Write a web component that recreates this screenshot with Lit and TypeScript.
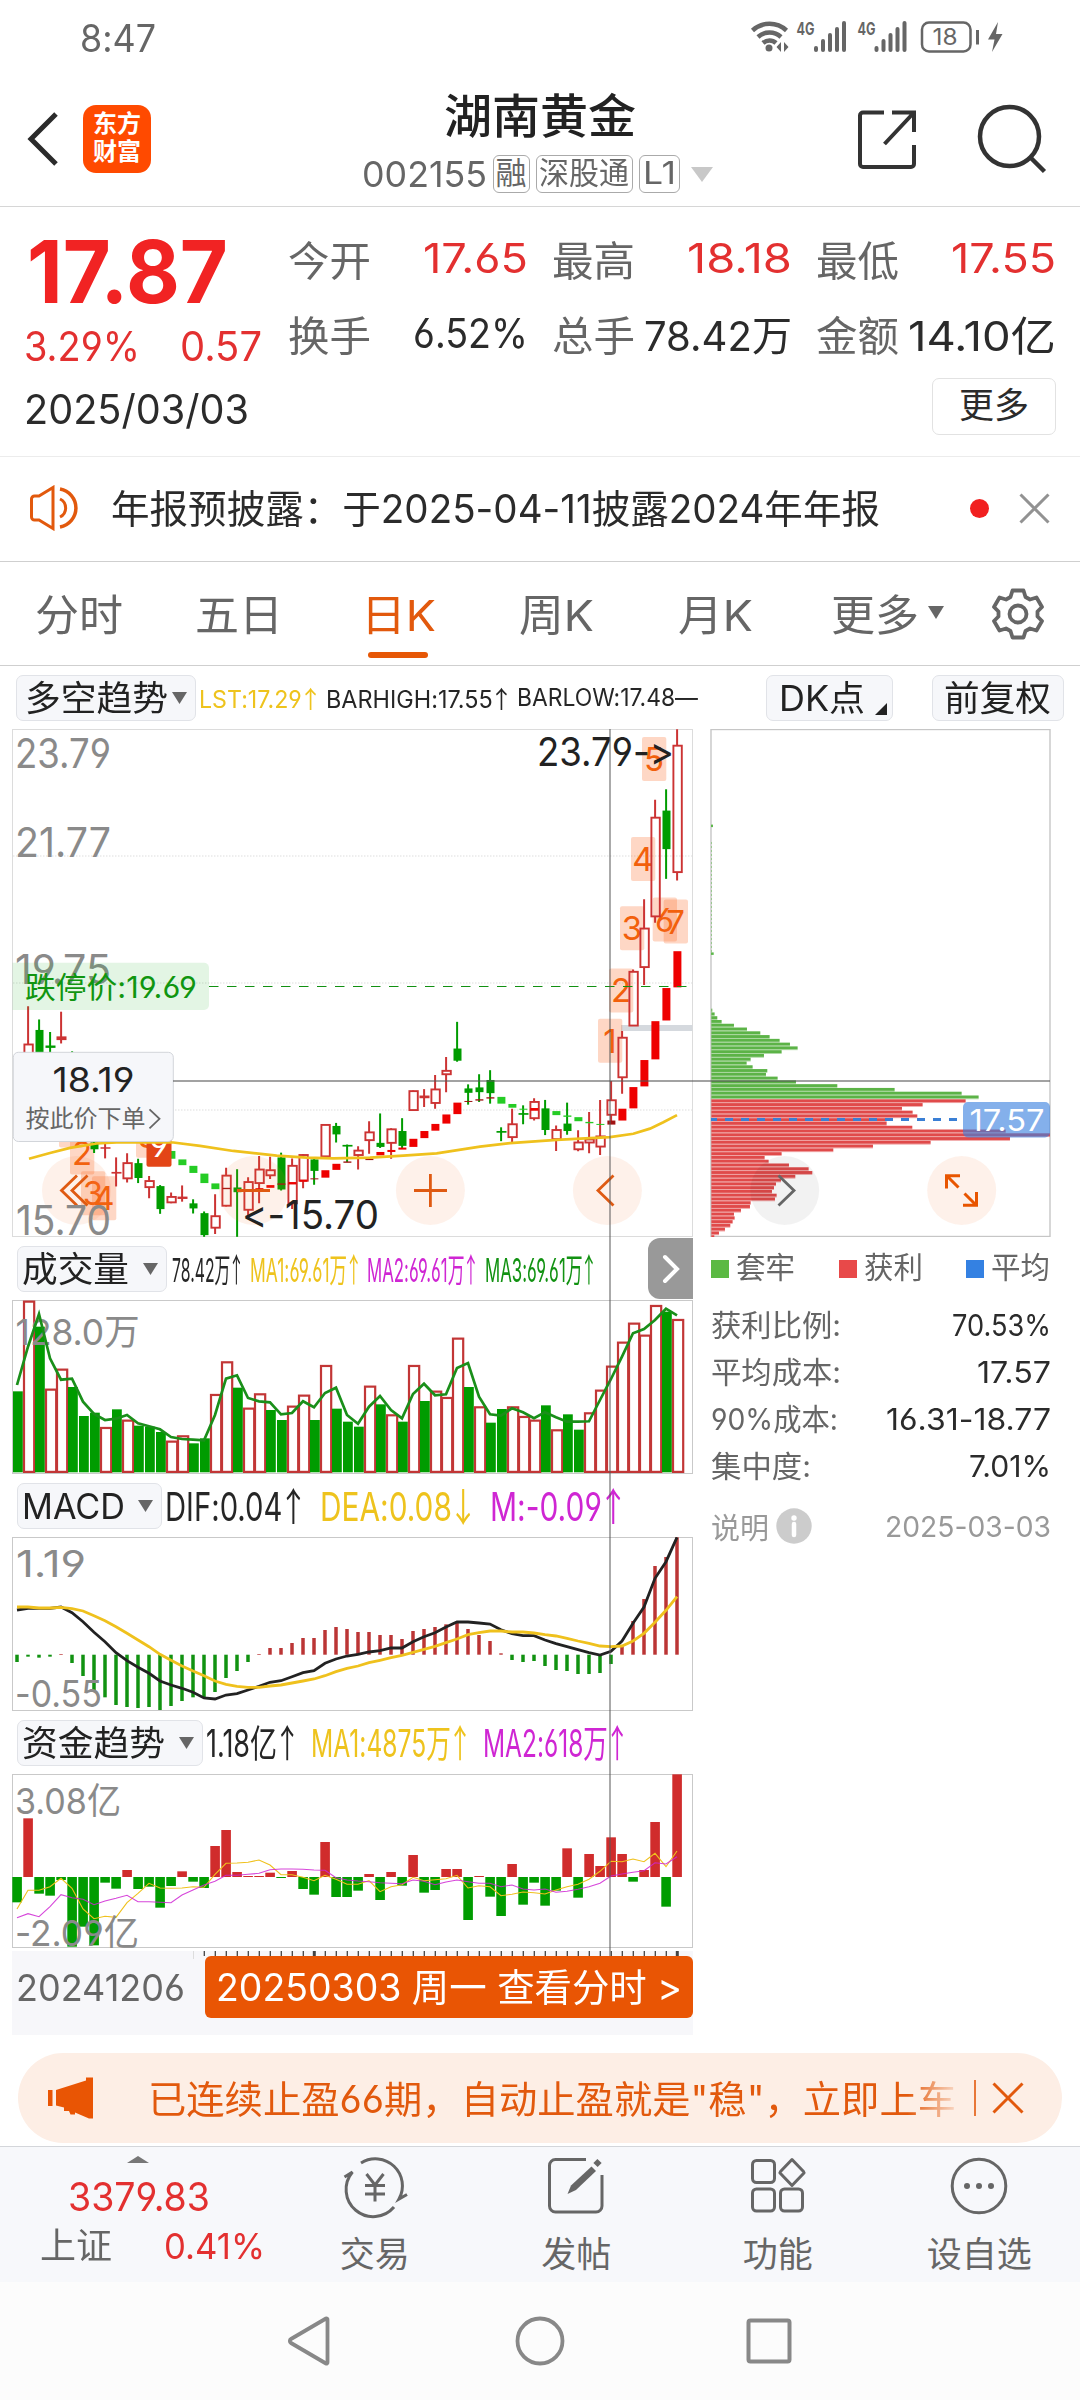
import { LitElement, html, svg, css, nothing } from "lit";
import { customElement, property } from "lit/decorators.js";
import { classMap } from "lit/directives/class-map.js";

const RED = "#cc3333";
const GREEN = "#009c00";
const YELLOW = "#efc11d";
const PURPLE = "#cf26d3";
const ORANGE = "#e85500";

/* One trading day every 11px; indicator values are in thirds of a pixel. */
const cx = (i: number) => 17 + 11 * i;
const t = (v: number) => v / 3;
/* Price units to pixels. */
const p = (v: number) => v / 2.9585;

/* index, wick top, body top, body bottom, wick bottom, kind (h hollow red, r solid red, g green) */
type Candle = [number, number, number, number, number, string];
const CANDLES: Candle[] = [
  [1, 847, 960, 1010, 1040, "h"], [2, 886, 917, 985, 1000, "g"], [3, 923, 963, 970, 985, "g"],
  [4, 863, 936, 947, 957, "r"], [5, 980, 990, 1040, 1050, "g"], [7, 1240, 1250, 1270, 1281, "g"],
  [8, 1250, 1264, 1268, 1297, "r"], [9, 1294, 1337, 1342, 1380, "r"], [10, 1282, 1311, 1356, 1368, "h"],
  [11, 1298, 1311, 1355, 1370, "g"], [12, 1349, 1364, 1382, 1415, "h"], [13, 1376, 1379, 1447, 1461, "g"],
  [14, 1398, 1411, 1427, 1430, "h"], [15, 1377, 1410, 1417, 1425, "r"], [16, 1418, 1430, 1445, 1460, "g"],
  [17, 1454, 1459, 1524, 1529, "g"], [18, 1403, 1468, 1502, 1521, "h"], [19, 1325, 1348, 1437, 1439, "h"],
  [20, 1329, 1383, 1397, 1529, "g"], [21, 1353, 1367, 1449, 1475, "h"], [22, 1290, 1330, 1370, 1430, "h"],
  [23, 1292, 1332, 1347, 1358, "h"], [24, 1280, 1294, 1389, 1392, "g"], [25, 1297, 1319, 1430, 1447, "h"],
  [26, 1285, 1287, 1363, 1385, "h"], [27, 1297, 1300, 1334, 1375, "g"], [28, 1196, 1198, 1291, 1293, "h"],
  [29, 1192, 1201, 1226, 1250, "g"], [30, 1256, 1257, 1262, 1308, "g"], [31, 1261, 1274, 1287, 1330, "h"],
  [32, 1187, 1220, 1243, 1283, "h"], [33, 1164, 1251, 1263, 1266, "g"], [34, 1208, 1211, 1251, 1298, "h"],
  [35, 1178, 1216, 1260, 1268, "g"], [36, 1096, 1098, 1154, 1156, "h"], [37, 1092, 1111, 1119, 1145, "r"],
  [38, 1050, 1093, 1133, 1150, "h"], [39, 997, 1038, 1048, 1101, "h"], [40, 893, 972, 1008, 1011, "g"],
  [41, 1078, 1090, 1103, 1138, "g"], [42, 1048, 1087, 1101, 1130, "g"], [43, 1036, 1065, 1104, 1135, "g"],
  [44, 1205, 1216, 1221, 1246, "g"], [45, 1150, 1196, 1234, 1254, "h"], [46, 1140, 1163, 1168, 1196, "g"],
  [47, 1119, 1130, 1178, 1185, "h"], [48, 1124, 1149, 1213, 1228, "g"], [49, 1200, 1213, 1240, 1275, "h"],
  [50, 1132, 1194, 1216, 1227, "g"], [51, 1214, 1250, 1270, 1276, "h"], [52, 1160, 1241, 1250, 1282, "h"],
  [53, 1124, 1232, 1262, 1287, "h"], [54, 1068, 1125, 1168, 1190, "h"], [55, 920, 940, 1057, 1106, "h"],
  [56, 738, 745, 904, 905, "h"], [57, 530, 617, 731, 784, "h"], [58, 236, 289, 581, 600, "h"],
  [59, 205, 268, 382, 470, "g"], [60, 27, 76, 450, 475, "h"],
];

/* index, top, bottom, kind (g green, r red, d dark red) */
const BANDS: [number, number, number, string][] = [
  [14, 1275, 1298, "g"], [15, 1300, 1317, "g"], [16, 1319, 1340, "g"], [17, 1342, 1370, "g"], [18, 1371, 1388, "g"],
  [19, 1384, 1388, "d"], [22, 1385, 1389, "r"], [23, 1376, 1384, "r"], [24, 1371, 1375, "d"], [25, 1367, 1374, "r"],
  [26, 1360, 1366, "r"], [27, 1356, 1359, "d"], [28, 1332, 1354, "r"], [29, 1313, 1331, "r"], [30, 1306, 1310, "d"],
  [32, 1298, 1302, "d"], [33, 1278, 1288, "r"], [34, 1272, 1278, "r"], [35, 1265, 1271, "r"], [36, 1239, 1263, "r"],
  [37, 1216, 1237, "r"], [38, 1195, 1215, "r"], [39, 1167, 1194, "r"], [40, 1132, 1166, "r"], [41, 1127, 1130, "d"],
  [42, 1122, 1126, "d"], [43, 1116, 1120, "d"], [44, 1115, 1135, "g"], [45, 1136, 1147, "g"], [46, 1150, 1153, "g"],
  [47, 1148, 1156, "r"], [49, 1157, 1169, "g"], [50, 1170, 1174, "g"], [51, 1175, 1187, "g"], [52, 1189, 1193, "g"],
  [53, 1195, 1198, "g"], [54, 1185, 1197, "d"], [55, 1150, 1185, "r"], [56, 1086, 1149, "r"], [57, 1006, 1084, "r"],
  [58, 891, 1004, "r"], [59, 793, 889, "r"], [60, 684, 791, "r"],
];
const BAND_FILL: Record<string, string> = { g: "#25cc25", r: "#ee0000", d: "#a01212" };

const TREND = [
  [87, 1298], [150, 1281], [210, 1266], [290, 1253], [350, 1250], [420, 1249], [520, 1250], [600, 1260], [700, 1275],
  [830, 1289], [920, 1295], [1000, 1297], [1110, 1295], [1210, 1289], [1310, 1282], [1440, 1262], [1530, 1252],
  [1670, 1242], [1770, 1237], [1830, 1234], [1900, 1224], [1950, 1209], [1990, 1190], [2031, 1169],
];

const VOLUME =
  "g484 r214 g290 r478 r418 g471 g558 g548 r593 g538 r571 g587 g590 g606 r634 r618 g640 g625 r494 r396 g473 r535 r492 g540 g570 r529 r496 g570 r407 g536 g575 g590 r469 g523 r555 g575 r407 g513 r484 r503 r325 g471 r531 g578 g537 r531 r560 r571 g526 r600 g553 g599 r549 r481 r409 r337 r280 r316 r227 g245 r269".split(" ");
const VOLUME_MA = [
  465, 350, 252, 385, 449, 446, 515, 552, 570, 566, 555, 580, 589, 598, 621, 627, 629, 631, 555, 446, 436, 504, 514,
  517, 553, 549, 514, 532, 489, 473, 555, 581, 530, 498, 540, 565, 492, 461, 496, 493, 414, 399, 500, 553, 557, 535,
  547, 565, 547, 562, 575, 575, 574, 510, 447, 380, 310, 297, 270, 236, 256,
];

const MACD = [
  576, 560, 563, 560, 552, 579, 618, 660, 682, 705, 711, 714, 711, 720, 708, 693, 682, 682, 666, 624, 603, 576, 552,
  534, 534, 519, 504, 504, 480, 471, 477, 486, 486, 495, 495, 507, 483, 477, 471, 463, 456, 477, 495, 513, 550, 570,
  576, 573, 588, 600, 603, 612, 612, 609, 582, 528, 453, 387, 288, 261, 202,
];
const DIF = [
  420, 415, 415, 415, 411, 428, 455, 487, 515, 548, 572, 592, 610, 633, 645, 655, 667, 684, 687, 675, 671, 660, 649,
  637, 632, 620, 608, 602, 580, 567, 558, 553, 546, 542, 534, 534, 515, 500, 488, 471, 456, 456, 459, 462, 479, 491,
  497, 497, 510, 521, 530, 539, 548, 555, 544, 513, 460, 411, 325, 275, 202,
];
const DEA = [
  411, 411, 414, 414, 412, 416, 423, 437, 452, 470, 490, 510, 530, 553, 571, 588, 603, 617, 633, 643, 649, 652, 652,
  648, 645, 639, 633, 627, 617, 605, 595, 588, 578, 571, 563, 556, 547, 538, 529, 518, 507, 494, 488, 483, 483, 486,
  486, 489, 494, 498, 505, 513, 520, 528, 530, 528, 513, 490, 457, 421, 380,
];

const FUND = [
  577, 325, 551, 557, 510, 710, 650, 706, 518, 536, 480, 537, 530, 593, 528, 484, 515, 534, 408, 360, 486, 498, 498,
  488, 504, 483, 537, 554, 396, 561, 561, 542, 492, 570, 486, 527, 435, 548, 540, 477, 477, 630, 498, 560, 618, 462,
  584, 518, 587, 542, 415, 563, 432, 468, 382, 432, 515, 480, 336, 590, 193,
];
const FUND_MA1 = [
  597, 541, 541, 530, 505, 535, 597, 626, 619, 622, 578, 550, 520, 534, 535, 534, 530, 532, 493, 460, 459, 457, 450,
  465, 494, 494, 502, 512, 496, 508, 523, 523, 512, 545, 530, 524, 502, 512, 509, 506, 496, 534, 527, 530, 557, 553,
  546, 548, 552, 540, 530, 523, 508, 484, 454, 455, 447, 455, 430, 470, 423,
];
const FUND_MA2 = [
  623, 611, 620, 590, 554, 563, 568, 584, 573, 565, 556, 575, 575, 577, 578, 555, 540, 525, 514, 496, 496, 493, 490,
  479, 477, 477, 478, 480, 481, 503, 510, 513, 515, 518, 520, 521, 510, 514, 524, 516, 510, 515, 520, 520, 530, 525,
  537, 540, 537, 547, 544, 538, 530, 520, 498, 492, 487, 482, 458, 462, 440,
];

const CHIPS_LOSS = [
  34, 37, 44, 52, 65, 102, 141, 181, 209, 239, 270, 293, 245, 192, 152, 140, 158, 202, 198, 233, 288, 412, 584, 785, 836,
];
const CHIPS_GAIN = [
  797, 668, 606, 638, 652, 560, 560, 637, 917, 1050, 930, 692, 519, 400, 245, 194, 206, 267, 326, 337, 286, 243, 228,
  222, 216, 230, 225, 152, 150, 123, 102, 104, 98, 91, 75, 57, 43,
];

const line = (values: number[]) => values.map((v, i) => `${cx(i)},${t(v).toFixed(1)}`).join(" ");

/* Text laid out at a given width: glyphs are condensed or widened to fill it. */
@customElement("fit-text")
class FitText extends LitElement {
  @property({ type: Number }) w = 0;
  @property() text = "";
  static styles = css`
    :host { display: inline-block; white-space: pre; flex: none; }
    .inner { display: inline-block; transform-origin: 0 50%; }
    .arrow { font-family: "Noto Sans CJK SC", sans-serif; margin-left: -0.12em; margin-right: -0.14em; }
  `;
  updated() {
    const inner = this.renderRoot.querySelector(".inner") as HTMLElement;
    inner.style.transform = "none";
    const natural = inner.getBoundingClientRect().width;
    this.style.width = `${this.w}px`;
    if (natural) inner.style.transform = `scaleX(${this.w / natural})`;
  }
  render() {
    const last = this.text.slice(-1);
    const arrow = last === "↑" || last === "↓";
    return html`<span class="inner">${arrow ? this.text.slice(0, -1) : this.text}${arrow ? html`<span class="arrow">${last}</span>` : nothing}</span>`;
  }
}

const fit = (text: string, w: number, cls = "") => html`<fit-text class=${cls} .text=${text} .w=${w}></fit-text>`;

const stext = (x: number, y: number, w: number, size: number, fill: string, text: string) =>
  svg`<text x=${x} y=${y} font-size=${size} fill=${fill} textLength=${w} lengthAdjust="spacingAndGlyphs">${text}</text>`;

const badge = (x: number, y: number, label: string) => svg`
  <rect x=${x} y=${y} width="24.3" height="44" rx="2" fill="#fa6a28" fill-opacity=".27" />
  <text x=${x + 12} y=${y + 34} font-size="33" text-anchor="middle" fill="#f2600c">${label}</text>`;

@customElement("price-chart")
class PriceChart extends LitElement {
  static styles = css`
    :host { display: block; height: 508px; }
    svg { display: block; font-family: Inter, "Noto Sans CJK SC", sans-serif; font-feature-settings: "cv03", "cv04", "calt" 0; }
  `;
  private candle([i, wt, bt, bb, wb, kind]: Candle) {
    const x = cx(i);
    const color = kind === "g" ? GREEN : RED;
    if (kind === "h") {
      return svg`<path d="M${x + 0.1} ${p(wt)}V${p(bt)}M${x + 0.1} ${p(bb)}V${p(wb)}" stroke=${color} stroke-width="2" />
        <rect x=${x - 3.6} y=${p(bt)} width="8.4" height=${p(bb - bt)} fill="none" stroke=${color} stroke-width="1.9" />`;
    }
    const w = bb - bt < 12 ? 10 : 8;
    return svg`<path d="M${x + 0.1} ${p(wt)}V${p(wb)}" stroke=${color} stroke-width="2" />
      <rect x=${x + 0.5 - w / 2} y=${p(bt)} width=${w} height=${Math.max(1.5, p(bb - bt))} fill=${color} />`;
  }
  render() {
    return html`<svg width="681" height="508" viewBox="12 9 681 508">
      <rect x="12.5" y="9.5" width="680" height="507" fill="none" stroke="#dcdcdc" />
      ${[136, 263, 390].map((y) => svg`<path d="M13 ${y}H692" stroke="#dddddd" stroke-dasharray="1.5 1.5" />`)}
      ${stext(15, 48.3, 96, 41, "#8a8a8a", "23.79")} ${stext(15, 137, 96, 41, "#8a8a8a", "21.77")}
      ${stext(15, 264, 96, 41, "#8a8a8a", "19.75")}
      <rect x="621" y="305" width="71.5" height="6" fill="#d5d9de" />
      ${badge(598, 298.8, "1")} ${badge(609, 248.4, "2")} ${badge(620, 186.2, "3")} ${badge(631, 117, "4")}
      ${badge(642, 17, "5")} ${badge(652.7, 177.5, "6")} ${badge(663.7, 179.5, "7")}
      ${badge(59, 383.6, "")} ${badge(70, 410.6, "2")} ${badge(81, 451.2, "3")} ${badge(92, 456.3, "4")}
      ${badge(136, 393.7, "8")}
      ${CANDLES.map((c) => this.candle(c))}
      ${BANDS.map(([i, a, b, k]) => svg`<rect x=${cx(i) - 3.6} y=${p(a)} width="8" height=${Math.max(1, p(b - a))} fill=${BAND_FILL[k]} />`)}
      <rect x="146.5" y="394" width="25" height="52.8" rx="2" fill="#e34517" />
      <text x="159" y="436.7" font-size="33" text-anchor="middle" fill="#fff">9</text>
      <polyline points=${TREND.map(([x, y]) => `${t(x)},${p(y)}`).join(" ")} fill="none" stroke=${YELLOW} stroke-width="2.7" />
      <g fill="#fa7332" fill-opacity=".1">
        <circle cx="76.5" cy="470.5" r="34.5" /><circle cx="253.5" cy="470.5" r="34.5" />
        <circle cx="430.4" cy="470.5" r="34.5" /><circle cx="607.4" cy="470.5" r="34.5" />
      </g>
      <g fill="none" stroke="#df5a12" stroke-width="2.8">
        <path d="M77 455.5L61.5 470.5L77 485.5M87.5 455.5L72 470.5L87.5 485.5" />
        <path d="M237 470.5H270M414 470.5H447M430.4 454V487" />
        <path d="M613.5 455.5L598 470.5L613.5 485.5" />
      </g>
      ${stext(16, 514.5, 95, 41, "#8a8a8a", "15.70")}
      ${stext(242, 508.7, 137, 39, "#222", "<-15.70")}
      ${stext(537, 45.6, 137, 39, "#222", "23.79->")}
      <path d="M209 266.5H687" stroke="#129012" stroke-dasharray="9.5 8.5" />
      <path d="M12.5 242.7H204a5 5 0 0 1 5 5V285a5 5 0 0 1 -5 5H12.5Z" fill="#27b02f" fill-opacity=".13" />
      ${stext(25, 278, 172, 30, "#109510", "跌停价:19.69")}
      <rect x="13.3" y="332.3" width="160" height="89.2" rx="5" fill="#f6f7fa" stroke="#d2d5da" />
      ${stext(52.5, 372.2, 82, 33.5, "#222", "18.19")}
      ${stext(25.5, 407.3, 120, 24, "#666", "按此价下单")}
      <path d="M149.5 389.4L159.5 398.8L149.5 408.3" fill="none" stroke="#666" stroke-width="1.8" />
    </svg>`;
  }
}

@customElement("indicator-chart")
class IndicatorChart extends LitElement {
  @property() kind = "volume";
  static styles = css`
    :host { display: block; height: 174px; }
    svg { display: block; font-family: Inter, "Noto Sans CJK SC", sans-serif; font-feature-settings: "cv03", "cv04", "calt" 0; }
  `;
  private volume() {
    return svg`
      ${VOLUME.map((d, i) => {
        const top = t(Number(d.slice(1)));
        return d[0] === "g"
          ? svg`<rect x=${cx(i) - 4} y=${top} width="9.8" height=${242.3 - top} fill=${GREEN} />`
          : svg`<rect x=${cx(i) - 4} y=${top + 0.3} width="10.2" height=${241.6 - top} fill="#fff" stroke="#c23636" stroke-width="2.2" />`;
      })}
      ${stext(15.5, 114.7, 124, 36, "#8a8a8a", "128.0万")}
      <polyline points=${line(VOLUME_MA)} fill="none" stroke="#1a8f1a" stroke-width="2.7" />`;
  }
  private macd() {
    return svg`
      ${stext(16, 107, 70, 37, "#8a8a8a", "1.19")}
      ${MACD.map((v, i) => svg`<path d="M${cx(i)} 184.7V${t(v)}" stroke=${v > 554 ? "#119211" : "#bb3535"} stroke-width="3.5" />`)}
      <polyline points=${line(DIF)} fill="none" stroke="#222" stroke-width="2.8" />
      <polyline points=${line(DEA)} fill="none" stroke=${YELLOW} stroke-width="2.8" />
      ${stext(15, 237, 87, 37, "#8a8a8a", "-0.55")}`;
  }
  private fund() {
    return svg`
      ${stext(15, 104.3, 106, 36, "#8a8a8a", "3.08亿")}
      ${FUND.map((v, i) => svg`<rect x=${cx(i) - 4.7} y=${t(Math.min(v, 501))} width="9.6" height=${t(Math.abs(v - 501))} fill=${v > 501 ? GREEN : "#d02c2c"} />`)}
      <polyline points=${line(FUND_MA1)} fill="none" stroke=${YELLOW} stroke-width="1.1" />
      <polyline points=${line(FUND_MA2)} fill="none" stroke=${PURPLE} stroke-width="1.1" stroke-opacity=".85" />
      ${stext(15, 236, 124, 36, "#8a8a8a", "-2.09亿")}`;
  }
  render() {
    const top = this.kind === "volume" ? 70 : this.kind === "macd" ? 67 : 64;
    return html`<svg width="681" height="174" viewBox="12 ${top} 681 174">
      <rect x="12.5" y=${top + 0.5} width="680" height="173" fill="none" stroke="#c9c9c9" />
      ${this.kind === "volume" ? this.volume() : this.kind === "macd" ? this.macd() : this.fund()}
    </svg>`;
  }
}

@customElement("chip-chart")
class ChipChart extends LitElement {
  static styles = css`
    :host { display: block; height: 508px; }
    svg { display: block; font-family: Inter, sans-serif; font-feature-settings: "cv03", "cv04"; }
  `;
  render() {
    const bar = (end: number, i: number, fill: string, base: number) =>
      svg`<rect x="11.3" y=${p(base + i * 11.17 - 4.2)} width=${t(end - 34)} height="2.9" fill=${fill} />
        <rect x="11.3" y=${p(base + i * 11.17 + 4.5)} width=${t(end - 34)} height=".8" fill=${fill} fill-opacity=".55" />`;
    return html`<svg width="342" height="508" viewBox="10 9 342 508">
      <rect x="11" y="9.5" width="339" height="507" fill="none" stroke="#c6c6c6" stroke-width="1.4" />
      <path d="M11.5 122V233" stroke="#5db84a" stroke-dasharray="2 2" stroke-opacity=".5" />
      <rect x="11" y="104.6" width="2" height="2.5" fill="#5db84a" /><rect x="11" y="232.4" width="2.7" height="2.5" fill="#5db84a" />
      ${CHIPS_LOSS.map((v, i) => bar(v, i, "#5cb347", 847))}
      ${CHIPS_GAIN.map((v, i) => bar(v, i, "#e04a4a", 1126.4))}
      <path d="M11 399.5H262" stroke="#3a7fd5" stroke-width="2.8" stroke-dasharray="8 8" stroke-dashoffset="2" />
      <rect x="263" y="382" width="87" height="35.5" rx="5" fill="#3880df" fill-opacity=".62" />
      ${stext(269.5, 410.7, 75, 30, "#fff", "17.57")}
      <circle cx="84.7" cy="470.5" r="34.5" fill="#000" fill-opacity=".05" />
      <path d="M78.5 455.5L94 470.5L78.5 485.5" fill="none" stroke="#666" stroke-width="2.8" />
      <circle cx="261.7" cy="470.5" r="34.5" fill="#fa7332" fill-opacity=".1" />
      <path d="M246.5 468.5V455.8H260M247 456L258.5 467.5M264.5 473.5L276 485M276.5 472V485.2H263" fill="none" stroke=${ORANGE} stroke-width="3" />
    </svg>`;
  }
}

@customElement("app-root")
class AppRoot extends LitElement {
  static styles = css`
    :host {
      display: block; width: 1080px; height: 2400px; overflow: hidden; background: #fff; color: #2b2b2b;
      font-family: Inter, "Noto Sans CJK SC", sans-serif; font-feature-settings: "cv03", "cv04", "calt" 0;
    }
    * { box-sizing: border-box; }
    svg { display: block; flex: none; }
    .status { height: 72px; padding: 0 76px 0 80px; display: flex; justify-content: space-between; color: #666; font-size: 38px; line-height: 76px; }
    .status svg { margin-top: 16px; }
    .header { height: 135px; display: grid; grid-template-columns: 360px 360px 360px; border-bottom: 1px solid #d6d6d6; }
    .brand { display: flex; align-items: center; padding-left: 26px; gap: 23px; }
    .logo { width: 68px; height: 68px; border-radius: 13px; background: #ff4a00; color: #fff; font-size: 24px; font-weight: 700; line-height: 28px; padding: 5px 0 0 10px; }
    .title { display: flex; flex-direction: column; align-items: center; padding-top: 15px; }
    .name { font-size: 47px; line-height: 57px; height: 57px; font-weight: 500; color: #222; }
    .code { display: flex; align-items: center; height: 60px; font-size: 36px; color: #666; margin-left: -6px; }
    .tag { height: 38px; border: 1.5px solid #aaa; border-radius: 6px; font-size: 31px; line-height: 34px; display: flex; justify-content: center; margin-left: 6px; }
    .code .tri { margin-left: 11px; }
    .actions { display: flex; align-items: center; justify-content: flex-end; padding-right: 33px; gap: 56px; }

    .quote { height: 250px; border-bottom: 1px solid #ececec; padding: 10px 24px 0 24px; }
    .figures { display: flex; height: 161px; }
    .latest { width: 264px; color: #e33030; }
    .price { font-size: 87px; font-weight: 650; line-height: 110px; height: 108px; padding-left: 3px; color: #f12323; }
    .change { display: flex; font-size: 41px; line-height: 42px; width: 238px; justify-content: space-between; }
    .stats { flex: 1; display: grid; grid-template-columns: repeat(3, 240px); column-gap: 24px; grid-template-rows: 75px 75px; padding-top: 3px; }
    .stat { display: flex; justify-content: space-between; align-items: center; font-size: 41px; }
    .stat .label { color: #666; }
    .up { color: #e33030; }
    .dateline { display: flex; justify-content: space-between; align-items: center; }
    .date { font-size: 41px; padding-top: 5px; }
    .more { width: 124px; height: 57px; border: 1.5px solid #e2e2e2; border-radius: 7px; font-size: 35px; line-height: 53px; text-align: center; }

    .notice { height: 105px; border-bottom: 1px solid #cfcfcf; display: flex; align-items: center; padding: 0 29px 2px 29px; font-size: 39px; }
    .notice .msg { margin-left: 30px; flex: 1; padding-bottom: 4px; }
    .dot { width: 19px; height: 19px; border-radius: 50%; background: #f12020; margin-right: 29px; }

    .tabs { height: 104px; border-bottom: 1px solid #cfcfcf; display: grid; grid-template-columns: repeat(6, 159px) 126px; color: #666; font-size: 43px; }
    .tab { position: relative; display: flex; align-items: center; justify-content: center; padding-bottom: 4px; }
    .tab:first-child { padding-right: 2px; }
    .tab.gear { padding: 0 0 0 2px; }
    .tab.active { color: #e2590d; padding-left: 1px; }
    .tab.active::after { content: ""; position: absolute; left: 50px; bottom: 7px; width: 60px; height: 6px; border-radius: 3px; background: #e65706; }
    .tab .tri { margin: 2px -25px 0 9px; }

    .tools { height: 63px; display: flex; align-items: center; padding: 0 16px; }
    .chip { height: 46px; border: 1.5px solid #e1e3e8; border-radius: 7px; background: #f6f7fa; color: #222; font-size: 35px; display: flex; align-items: center; flex: none; position: relative; line-height: 44px; }
    .readout { display: flex; align-items: center; white-space: pre; }
    .tools .readout { font-size: 24px; margin-left: 3px; gap: 7px; flex: 1; }
    .corner { position: absolute; right: 5px; bottom: 5px; }
    .c-y { color: #eec31d; } .c-k { color: #262626; } .c-p { color: #cf26d3; } .c-g { color: #129212; }

    .board { position: relative; display: flex; padding-left: 12px; }
    .left { width: 681px; }
    .row { display: flex; align-items: center; height: 63px; padding-left: 5px; }
    .row .readout { line-height: 44px; }
    .row.first .readout { font-size: 33px; margin-left: 5px; gap: 7.5px; flex: 1; }
    .row.macd .readout { font-size: 39px; margin-left: 3px; gap: 16px; }
    .row.fund .readout { font-size: 38px; margin-left: 3px; gap: 14px; padding-bottom: 2px; }
    .expand { width: 45px; height: 61px; background: #999; border-radius: 12px 0 0 12px; display: flex; align-items: center; justify-content: center; }
    .axis { margin-top: 3px; height: 84px; background: #f7f7fa; display: flex; position: relative; color: #666; font-size: 37px; }
    .axis .start { margin: 0 20px 0 4px; line-height: 74px; }
    .ticks { position: absolute; left: 0; top: 0; }
    .goto { margin-top: 5px; width: 488px; height: 62px; background: #e95504; border-radius: 6px; color: #fff; font-size: 38px; line-height: 62px; padding-left: 11px; }
    .vline { position: absolute; left: 609px; top: 0; width: 2px; height: 1227px; background: #555; opacity: .5; }
    .hline { position: absolute; left: 173px; top: 351px; width: 877px; height: 2px; background: #555; opacity: .55; }

    .right { margin-left: 17px; width: 341px; }
    .legend { display: flex; justify-content: space-between; height: 63px; align-items: center; padding: 0 1px; color: #666; font-size: 30px; line-height: 36px; }
    .key { display: flex; align-items: center; gap: 7px; }
    .key fit-text { margin-top: -3px; }
    .sq { width: 18px; height: 18px; }
    .sq.g { background: #5bb943; } .sq.r { background: #e84949; } .sq.b { background: #3481e2; }
    .facts { padding: 1px 0 0 1px; font-size: 30px; }
    .fact { display: flex; justify-content: space-between; align-items: center; height: 47px; color: #2b2b2b; line-height: 40px; }
    .fact .label { color: #666; }
    .explain { display: flex; align-items: center; height: 60px; margin-top: 7px; color: #999; font-size: 29px; padding-left: 1px; justify-content: space-between; }
    .explain .info { display: flex; align-items: center; gap: 7px; }

    .banner { margin: 18px 18px 0; height: 90px; border-radius: 45px; background: #fdeee5; color: #e2590d; font-size: 38px; display: flex; align-items: center; padding-left: 30px; }
    .banner .msg { margin-left: 54px; padding-bottom: 4px; -webkit-mask-image: linear-gradient(90deg, #000 94%, rgba(0,0,0,.15) 100%); }
    .banner .bar { width: 1.5px; height: 36px; background: #e2590d; margin: 0 16px 0 18px; opacity: .8; }

    .nav { margin-top: 3px; height: 136px; border-top: 1.5px solid #d4d6da; background: #f7f8fb; display: grid; grid-template-columns: 274px repeat(4, 201.5px); color: #666; }
    .index { display: flex; flex-direction: column; padding-left: 40px; }
    .index .tri { margin: 9px 0 0 87px; }
    .index .value { font-size: 40px; line-height: 52px; margin: 8px 0 0 28px; color: #e33030; }
    .index .pct { font-size: 36px; line-height: 46px; display: flex; width: 225px; justify-content: space-between; }
    .item { display: flex; flex-direction: column; align-items: center; font-size: 35px; padding-top: 9px; }
    .item svg { overflow: visible; }
    .item .label { line-height: 40px; margin-top: 18px; }
    .system { height: 118px; background: #fcfcfc; display: flex; align-items: center; padding: 0 0 0 286px; }
    .system .circle { margin-left: 183px; } .system .square { margin-left: 180px; }
  `;

  private tri(w: number, h: number, color: string, up = false) {
    return html`<svg class="tri" width=${w} height=${h} viewBox="0 0 10 10" preserveAspectRatio="none">
      <path d=${up ? "M0 10H10L5 0Z" : "M0 0H10L5 10Z"} fill=${color} />
    </svg>`;
  }

  private bars(x: number) {
    return [0, 1, 2, 3, 4].map((i) => {
      const top = [46, 39, 33, 27, 21][i];
      return svg`<path d="M${x + i * 7} ${top + 2}V50" stroke="#666" stroke-width="4" stroke-linecap="round" />`;
    });
  }

  private status() {
    return html`<div class="status">
      ${fit("8:47", 76)}
      <svg width="254" height="40" viewBox="750 16 254 40">
        <g fill="none" stroke="#666" stroke-width="4.5">
          <path d="M752.5 30.5A25 25 0 0 1 786.5 30.5M758 37A17 17 0 0 1 781 37M763 43A9.5 9.5 0 0 1 776 43" />
        </g>
        <circle cx="769" cy="48" r="3.5" fill="#666" />
        <path d="M781 42V52L776.5 47ZM784 42V52L788.5 47Z" fill="#666" />
        ${this.bars(816)} ${this.bars(876.5)}
        <g font-weight="700">${stext(796.5, 34.5, 18, 17.5, "#666", "4G")}${stext(857.5, 34.5, 18, 17.5, "#666", "4G")}</g>
        <rect x="922" y="22.5" width="48.5" height="29" rx="7" fill="none" stroke="#666" stroke-width="2.5" />
        ${stext(932.5, 45.3, 25, 22.5, "#666", "18")}
        <path d="M977.5 30V44.5" stroke="#666" stroke-width="3" />
        <path d="M998 22L988 39.5H994.5L992 52L1002.5 34H996Z" fill="#666" />
      </svg>
    </div>`;
  }

  private header() {
    return html`<div class="header">
      <div class="brand">
        <svg width="34" height="56" viewBox="0 0 34 56"><path d="M30 3L5 28L30 53" fill="none" stroke="#2b2b2b" stroke-width="5" /></svg>
        <div class="logo">东方<br />财富</div>
      </div>
      <div class="title">
        <div class="name">${fit("湖南黄金", 192)}</div>
        <div class="code">
          ${fit("002155", 125)}
          <span class="tag" style="width:37px">${fit("融", 31)}</span>
          <span class="tag" style="width:97px">${fit("深股通", 90)}</span>
          <span class="tag" style="width:41px">${fit("L1", 33)}</span>
          ${this.tri(22, 15, "#c8c8c8")}
        </div>
      </div>
      <div class="actions">
        <svg width="64" height="64" viewBox="0 0 64 64" fill="none" stroke="#333" stroke-width="4">
          <path d="M29 5.5H8a3 3 0 0 0 -3 3V57a3 3 0 0 0 3 3H56a3 3 0 0 0 3 -3V38M37 5.5H59V25M59 5.5L29.5 37" />
        </svg>
        <svg width="72" height="72" viewBox="0 0 72 72" fill="none" stroke="#333" stroke-width="4.5">
          <circle cx="34.5" cy="33.5" r="29.5" /><path d="M55 54L69.5 68.5" />
        </svg>
      </div>
    </div>`;
  }

  private quote() {
    const stats: [string, string, number, boolean][] = [
      ["今开", "17.65", 105, true], ["最高", "18.18", 105, true], ["最低", "17.55", 105, true],
      ["换手", "6.52%", 115, false], ["总手", "78.42万", 148, false], ["金额", "14.10亿", 148, false],
    ];
    return html`<div class="quote">
      <div class="figures">
        <div class="latest">
          <div class="price">${fit("17.87", 201)}</div>
          <div class="change">${fit("3.29%", 116)}${fit("0.57", 82)}</div>
        </div>
        <div class="stats">
          ${stats.map(([label, value, w, up]) => html`<div class="stat">${fit(label, 83, "label")}${fit(value, w, up ? "up" : "")}</div>`)}
        </div>
      </div>
      <div class="dateline"><span class="date">${fit("2025/03/03", 225)}</span><div class="more">更多</div></div>
    </div>`;
  }

  private notice() {
    return html`<div class="notice">
      <svg width="52" height="46" viewBox="0 0 52 46" fill="none" stroke="#e2590d" stroke-width="3">
        <path d="M2.5 14a3 3 0 0 1 3 -3H10L24 2.5V43.5L10 35H5.5a3 3 0 0 1 -3 -3Z" />
        <path d="M31 14a10 10 0 0 1 0 18" /><path d="M31 4a19.3 19.3 0 0 1 0 38" stroke-width="3.5" />
      </svg>
      <div class="msg">${fit("年报预披露：于2025-04-11披露2024年年报", 769)}</div>
      <div class="dot"></div>
      <svg width="33" height="33" viewBox="0 0 33 33"><path d="M2.5 2.5L30.5 30.5M30.5 2.5L2.5 30.5" stroke="#929292" stroke-width="3" /></svg>
    </div>`;
  }

  private tabs() {
    return html`<div class="tabs">
      ${["分时", "五日", "日K", "周K", "月K", "更多"].map(
        (label) => html`<div class=${classMap({ tab: true, active: label === "日K" })}>
          ${fit(label, label.endsWith("K") ? 75 : 88)}${label === "更多" ? this.tri(16, 13, "#666") : nothing}
        </div>`,
      )}
      <div class="tab gear">
        <svg width="54" height="54" viewBox="-27 -27 54 54" fill="none" stroke="#666" stroke-width="3.8" stroke-linejoin="round">
          <path d="M-5.5 -23.5H5.5L7.5 -17L12 -14.5L18.5 -16.5L24 -7L19.5 -2.5V2.5L24 7L18.5 16.5L12 14.5L7.5 17L5.5 23.5H-5.5L-7.5 17L-12 14.5L-18.5 16.5L-24 7L-19.5 2.5V-2.5L-24 -7L-18.5 -16.5L-12 -14.5L-7.5 -17Z" />
          <circle r="8.5" />
        </svg>
      </div>
    </div>`;
  }

  private tools() {
    return html`<div class="tools">
      <div class="chip" style="width:180px;padding-left:8px;gap:4px">${fit("多空趋势", 143)}${this.tri(15, 12, "#666")}</div>
      <div class="readout">
        ${fit("LST:17.29↑", 120, "c-y")}${fit("BARHIGH:17.55↑", 184, "c-k")}${fit("BARLOW:17.48—", 181, "c-k")}
      </div>
      <div class="chip" style="width:127px;padding-left:12px">
        ${fit("DK点", 86)}
        <svg class="corner" width="12" height="12" viewBox="0 0 12 12"><path d="M12 0V12H0Z" fill="#222" /></svg>
      </div>
      <div class="chip" style="width:132px;padding-left:11px;margin-left:39px">${fit("前复权", 107)}</div>
    </div>`;
  }

  private indicatorChip(label: string, textWidth: number, width: number) {
    return html`<div class="chip" style="width:${width}px;padding:0 8px 0 4px;justify-content:space-between">
      ${fit(label, textWidth)}${this.tri(15, 12, "#666")}
    </div>`;
  }

  private board() {
    const facts: [string, number, string, number][] = [
      ["获利比例:", 130, "70.53%", 99], ["平均成本:", 130, "17.57", 74],
      ["90%成本:", 127, "16.31-18.77", 165], ["集中度:", 100, "7.01%", 82],
    ];
    return html`<div class="board">
      <div class="left">
        <price-chart></price-chart>
        <div class="row first">
          ${this.indicatorChip("成交量", 107, 150)}
          <div class="readout">
            ${fit("78.42万↑", 70, "c-k")}${fit("MA1:69.61万↑", 110, "c-y")}${fit("MA2:69.61万↑", 110, "c-p")}${fit("MA3:69.61万↑", 110, "c-g")}
          </div>
          <div class="expand"><svg width="18" height="30" viewBox="0 0 18 30"><path d="M3 3L15 15L3 27" fill="none" stroke="#fff" stroke-width="4" stroke-linecap="round" /></svg></div>
        </div>
        <indicator-chart kind="volume"></indicator-chart>
        <div class="row macd">
          ${this.indicatorChip("MACD", 103, 145)}
          <div class="readout">${fit("DIF:0.04↑", 139, "c-k")}${fit("DEA:0.08↓", 154, "c-y")}${fit("M:-0.09↑", 134, "c-p")}</div>
        </div>
        <indicator-chart kind="macd"></indicator-chart>
        <div class="row fund">
          ${this.indicatorChip("资金趋势", 143, 186)}
          <div class="readout">${fit("1.18亿↑", 91, "c-k")}${fit("MA1:4875万↑", 158, "c-y")}${fit("MA2:618万↑", 143, "c-p")}</div>
        </div>
        <indicator-chart kind="fund"></indicator-chart>
        <div class="axis">
          <svg class="ticks" width="681" height="8" viewBox="12 0 681 8">
            ${Array.from({ length: 44 }, (_, k) => {
              const i = k + 17;
              return svg`<path d="M${cx(i) + 0.3} 0V5" stroke="#444" stroke-width=${i === 27 || i === 60 ? 3 : 1.3} />`;
            })}
            <path d="M193.5 0V8" stroke="#ddd" />
          </svg>
          <span class="start">${fit("20241206", 169)}</span>
          <div class="goto">${fit("20250303 周一 查看分时 >", 466)}</div>
        </div>
      </div>
      <div class="right">
        <chip-chart></chip-chart>
        <div class="legend">
          <span class="key"><i class="sq g"></i>${fit("套牢", 59)}</span>
          <span class="key"><i class="sq r"></i>${fit("获利", 59)}</span>
          <span class="key"><i class="sq b"></i>${fit("平均", 59)}</span>
        </div>
        <div class="facts">
          ${facts.map(([l, lw, v, vw]) => html`<div class="fact">${fit(l, lw, "label")}${fit(v, vw)}</div>`)}
        </div>
        <div class="explain">
          <span class="info">${fit("说明", 58)}
            <svg width="36" height="36" viewBox="0 0 36 36">
              <circle cx="18" cy="18" r="17.7" fill="#ccc" /><circle cx="18" cy="10" r="2.7" fill="#fff" />
              <path d="M18 16V27" stroke="#fff" stroke-width="4.5" stroke-linecap="round" />
            </svg>
          </span>
          ${fit("2025-03-03", 166)}
        </div>
      </div>
      <div class="vline"></div>
      <div class="hline"></div>
    </div>`;
  }

  private banner() {
    return html`<div class="banner">
      <svg width="46" height="42" viewBox="0 0 46 42"><path d="M0 13H4.5V29H0ZM8 13L38 3.5V0.5H45V41.5H41L27 35.5V37.5H22.5L21 34H16V30.5L8 28.5Z" fill="#e95504" /></svg>
      <div class="msg">${fit('已连续止盈66期，自动止盈就是"稳"，立即上车', 808)}</div>
      <span class="bar"></span>
      <svg width="32" height="32" viewBox="0 0 32 32"><path d="M1.5 1.5L30.5 30.5M30.5 1.5L1.5 30.5" stroke="#e2590d" stroke-width="3" /></svg>
    </div>`;
  }

  private nav() {
    const icons = [
      svg`<path d="M16 7A27 27 0 0 1 54 43L62 38.5M49 51A27 27 0 0 1 7.500 16L-.5 21" />
        <path d="M21.500 18L30 29L38.500 18M30 29V45.500M20 29.500H40M20 38H40" />`,
      svg`<path d="M40 3.500H9.500a6 6 0 0 0 -6 6V50a6 6 0 0 0 6 6H50a6 6 0 0 0 6 -6V19" />
        <path d="M45.500 10.500L50 15L30 34L21.500 38L25 29.500Z" fill="#666" stroke="none" /><path d="M49.500 9L53.500 5" stroke-width="6" />`,
      svg`<rect x="4.500" y="4.500" width="22" height="22" rx="4" /><rect x="4.500" y="33" width="22" height="22" rx="4" />
        <rect x="32.500" y="33" width="22" height="22" rx="4" /><path d="M44 3.500L55.500 15.500a1.500 1.500 0 0 1 0 2L44 29.500L32.500 17.500a1.500 1.500 0 0 1 0 -2Z" stroke-linejoin="round" />`,
      svg`<circle cx="30" cy="30" r="26.800" /><g fill="#666" stroke="none"><circle cx="18" cy="30" r="3" /><circle cx="30" cy="30" r="3" /><circle cx="42" cy="30" r="3" /></g>`,
    ];
    return html`<div class="nav">
      <div class="index">
        ${this.tri(22, 7, "#777", true)}
        <div class="value">${fit("3379.83", 142)}</div>
        <div class="pct">${fit("上证", 72)}${fit("0.41%", 101, "up")}</div>
      </div>
      ${["交易", "发帖", "功能", "设自选"].map(
        (label, i) => html`<div class="item">
          <svg width="62" height="60" viewBox="0 0 60 60" fill="none" stroke="#666" stroke-width="3">${icons[i]}</svg>
          <span class="label">${label}</span>
        </div>`,
      )}
    </div>`;
  }

  private system() {
    return html`<div class="system">
      <svg width="46" height="52" viewBox="0 0 46 52"><path d="M41.5 4.5V47.5a1 1 0 0 1 -1.5 1L5 28a2.3 2.3 0 0 1 0 -4L40 3.5a1 1 0 0 1 1.5 1Z" fill="none" stroke="#888" stroke-width="3.8" /></svg>
      <svg class="circle" width="50" height="50" viewBox="0 0 50 50"><circle cx="25" cy="25" r="22.5" fill="none" stroke="#888" stroke-width="3.8" /></svg>
      <svg class="square" width="48" height="48" viewBox="0 0 48 48"><rect x="3.5" y="3.5" width="41" height="41" rx="2" fill="none" stroke="#888" stroke-width="4" /></svg>
    </div>`;
  }

  render() {
    return html`${this.status()}${this.header()}${this.quote()}${this.notice()}${this.tabs()}${this.tools()}${this.board()}${this.banner()}${this.nav()}${this.system()}`;
  }
}
